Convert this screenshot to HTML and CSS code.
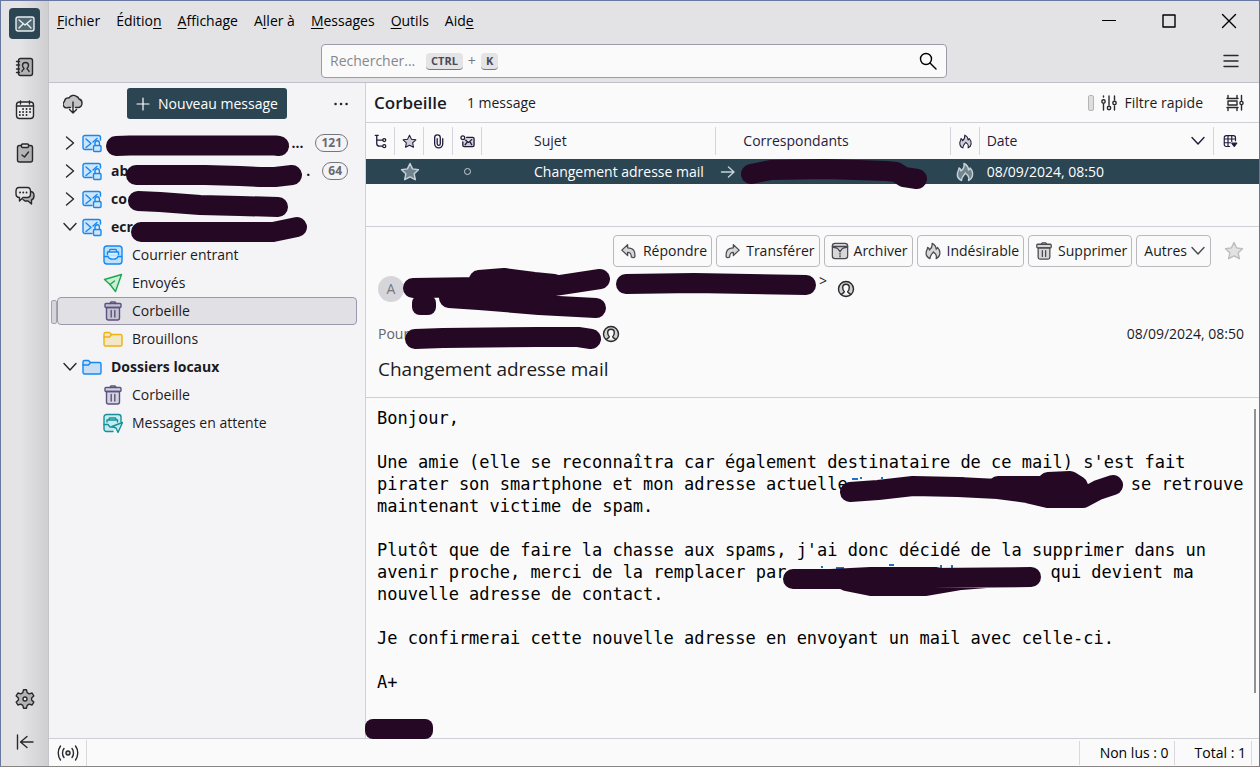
FILE: index.html
```
<!DOCTYPE html>
<html lang="fr">
<head>
    <meta charset="UTF-8">
    <meta name="viewport" content="width=device-width, initial-scale=1.0">
    <title>Corbeille</title>
    <link rel="stylesheet" href="styles.css">
</head>
<body>

    <!-- Icon set -->
    <svg class="icon-set" aria-hidden="true">
        <symbol id="i-mail" viewBox="0 0 20 20"><rect x="1" y="3" width="18" height="14" rx="2" fill="#ffffff30"/><path d="M4 6l6 5 6-5M4 14l4-4M16 14l-4-4"/></symbol>
        <symbol id="i-book" viewBox="0 0 20 20"><rect x="3.5" y="1.5" width="14" height="17" rx="2" fill="#0003"/><path d="M1.500 4.500h3M1.500 8h3M1.500 12h3M1.500 15.500h3M7 14.500c0-2 2-1.500 2-3-1-1-1.500-2-1.500-3a3 3 0 0 1 6 0c0 1-.5 2-1.500 3 0 1.500 2 1 2 3"/></symbol>
        <symbol id="i-calendar" viewBox="0 0 20 20"><rect x="1.500" y="2" width="17" height="16.500" rx="3" fill="#fff6"/><path d="M1.500 6h17M5.500 1v3M14.500 1v3"/><path d="M8 9h.1M11.500 9h.1M15 9h.1M4.800 12h.1M8 12h.1M11.500 12h.1M15 12h.1M4.800 15h.1M8 15h.1M11.500 15h.1" stroke-width="1.800"/></symbol>
        <symbol id="i-tasks" viewBox="0 0 20 20"><rect x="2.500" y="2.500" width="15" height="16.500" rx="2" fill="#0003"/><rect x="6.500" y="1" width="7" height="3.500" rx="1" fill="#ddd"/><path d="M7 12l2.500 2 4-5"/></symbol>
        <symbol id="i-chat" viewBox="0 0 20 20"><path d="M15 5.500c3 0 4 1.500 4 4s-1 4-2.500 4.500v4L13 15h-3l-2-1.500" fill="#0003"/><path d="M4 1.500h8.500c2 0 3 1.500 3 4v2c0 2.500-1 4-3 4H8L4.500 15v-3.500C2 11.500 1 10 1 7.500v-2c0-2.500 1-4 3-4z" fill="#e6e6e6"/><path d="M5 6.500h.1M8.200 6.500h.1M11.500 6.500h.1" stroke-width="1.800"/></symbol>
        <symbol id="i-gear" viewBox="0 0 20 20"><path d="M8.500.8h3l.7 2.900 2 1.200 2.900-.9 1.700 2.900-2.200 2v2.200l2.200 2-1.700 2.900-2.900-.9-2 1.200-.7 2.900h-3l-.7-2.900-2-1.200-2.900.9-1.700-2.900 2.200-2V8.900l-2.200-2L2.900 4l2.900.9 2-1.200z" fill="#0003"/><circle cx="10" cy="10" r="2" fill="#eee"/></symbol>
        <symbol id="i-collapse" viewBox="0 0 20 20"><path d="M2.500 3v14M18 10H5.500M12 4.500L5.500 10l6.500 5.500"/></symbol>
        <symbol id="i-cloud" viewBox="0 0 20 20"><path d="M7.500 13.500H5A3.500 3.500 0 0 1 1.500 7.500 3.500 3.500 0 0 1 6 4a5 5 0 0 1 7.500-1.500A3.800 3.800 0 0 1 16 5c2 .5 3 2 3 4 0 2.500-1.500 4.500-4 4.500h-2.500" fill="#0003"/><path d="M10 8v11M6.500 15.500L10 19l3.500-3.500"/></symbol>
        <symbol id="i-plus" viewBox="0 0 16 16"><path d="M8 2v12M2 8h12"/></symbol>
        <symbol id="i-dots" viewBox="0 0 20 20"><path d="M4.500 10h.1M10 10h.1M15.500 10h.1" stroke-width="2.500"/></symbol>
        <symbol id="i-right" viewBox="0 0 16 16"><path d="M4.500 2l7 6-7 6"/></symbol>
        <symbol id="i-down" viewBox="0 0 16 16"><path d="M2 4.500l6 6.500 6-6.500"/></symbol>
        <symbol id="i-account" viewBox="0 0 20 20"><path d="M10 16.500H3a2 2 0 0 1-2-2v-10a2 2 0 0 1 2-2h13.500a2 2 0 0 1 2 2V7" fill="#cfe5fb"/><path d="M4 6l5 4.500-5 4M15 5.500L11 9"/><rect x="11.500" y="12.500" width="7.500" height="6" rx="1" fill="#cfe5fb"/><path d="M13 12.500V10a2.200 2.200 0 0 1 4.400 0v2.500"/></symbol>
        <symbol id="i-inbox" viewBox="0 0 20 20"><rect x="1" y="1" width="18" height="18" rx="3" fill="#bfe0fd"/><path d="M1.500 11.500H5c1 3.500 9 3.500 10 0h3.500M4.500 9.500V7h11v2.500M6 7l1-2.500h6L14 7" fill="#e4f2ff"/></symbol>
        <symbol id="i-sent" viewBox="0 0 20 20"><path d="M18.500 1.500L1.500 6.500l5.500 5 5.500 7z" fill="#c9efd6"/><path d="M7 11.500l4.500-3.500"/></symbol>
        <symbol id="i-trash" viewBox="0 0 20 20"><path d="M3.500 6.500h13V17a2 2 0 0 1-2 2h-9a2 2 0 0 1-2-2z" class="tint"/><rect x="2" y="2.500" width="16" height="4" rx="1" class="tint"/><path d="M7 2.500l1-1.500h4l1 1.500M8.200 9.500v6.500M11.800 9.500v6.500"/></symbol>
        <symbol id="i-folder" viewBox="0 0 20 20"><path d="M1 15.500V5a1.500 1.500 0 0 1 1.500-1.500h4l2 2h9A1.500 1.500 0 0 1 19 7v8.500a1.500 1.500 0 0 1-1.500 1.500h-15A1.500 1.500 0 0 1 1 15.500z" class="tint"/><path d="M1 8h5.500l2-2.500"/></symbol>
        <symbol id="i-outbox" viewBox="0 0 20 20"><path d="M10 18.500H3.500A2.500 2.500 0 0 1 1 16V4a2.500 2.500 0 0 1 2.500-2.500h12A2.500 2.500 0 0 1 18 4v5" fill="#c3ecee"/><path d="M1 11.500h4l2 2.500h3M4 9V7h10.500v2M5.500 7l1-2h6l1 2"/><path d="M19.500 9.500l-10.500 4 4 1.500 2 4.500z" fill="#c3ecee"/></symbol>
        <symbol id="i-search" viewBox="0 0 20 20"><circle cx="8" cy="8" r="5.500"/><path d="M12 12l6 6"/></symbol>
        <symbol id="i-menu" viewBox="0 0 20 20"><path d="M3 4.500h14M3 10h14M3 15.500h14"/></symbol>
        <symbol id="i-min" viewBox="0 0 16 16"><path d="M1.500 7.500h13" stroke-width="1"/></symbol>
        <symbol id="i-max" viewBox="0 0 16 16"><rect x="2" y="2" width="12" height="12"/></symbol>
        <symbol id="i-close" viewBox="0 0 16 16"><path d="M1.500 1.500l13 13M14.500 1.500l-13 13"/></symbol>
        <symbol id="i-filter" viewBox="0 0 18 18"><path d="M3.500 2v1M3.500 10v6M9 2v9M14.500 2v4M14.500 12v4"/><circle cx="3.500" cy="7.500" r="1.700"/><circle cx="9" cy="14" r="1.700"/><circle cx="14.500" cy="9" r="1.700"/></symbol>
        <symbol id="i-display" viewBox="0 0 18 18"><path d="M2 1.500v3h9v-3M2 16.500v-3h9v3M15.500 1.500v5M15.500 11v5M1 4.500h11M1 13.500h11"/><rect x="2" y="7" width="9" height="4"/><circle cx="15.500" cy="9" r="1.600"/></symbol>
        <symbol id="i-thread" viewBox="0 0 16 16"><path d="M2.500 1.500h3M4 1.500V10c0 2 1 3 3 3h3M4 6.500h6.500"/><circle cx="12" cy="6.500" r="1.600"/><circle cx="12" cy="13" r="1.600"/></symbol>
        <symbol id="i-star" viewBox="0 0 20 20"><path d="M10 1.500l2.600 5.400 5.900.8-4.300 4.100 1.100 5.900L10 14.900l-5.300 2.800 1.100-5.900L1.500 7.700l5.900-.8z" class="tint"/></symbol>
        <symbol id="i-clip" viewBox="0 0 16 16"><path d="M12.500 5v5.500a4.300 4.300 0 0 1-8.600 0V4a3 3 0 0 1 6 0v6.500a1.600 1.600 0 0 1-3.300 0V5"/></symbol>
        <symbol id="i-unread" viewBox="0 0 16 16"><path d="M7 3.500h6.500a1.500 1.500 0 0 1 1.500 1.500v7a1.500 1.500 0 0 1-1.500 1.500h-9A1.500 1.500 0 0 1 3 12V8.500M6 6.500l3 2.500 3.500-3M5.500 11.500L7.500 9M12.500 11.500L11 9" class="tint"/><circle cx="3" cy="4" r="2"/></symbol>
        <symbol id="i-flame" viewBox="0 0 20 20"><path d="M6.500 18.500C3 17 2 14 2.500 11c.5-2 1.500-3 1.500-5 1 .5 2 2 2 3C8 7.500 9.500 5 9 1.500c3 1.500 4.500 4 4.500 6.500 1-.5 1.500-1 1.500-2 2 2 3 5 2.500 7.500-.4 2.500-1.800 4-4 5 .5-2 .5-4-1-5.500-1 0-1.500-1-2-2-1.500 2-4 4-4 7.500z" class="tint"/></symbol>
        <symbol id="i-columns" viewBox="0 0 18 18"><path d="M8 15H4a2.500 2.500 0 0 1-2.500-2.500v-8A2.500 2.500 0 0 1 4 2h8.500A2.500 2.500 0 0 1 15 4.500V8M1.500 6H15M1.500 10.500H9M6 2v13M10.500 2v7"/><path d="M10.500 11h6l-3 4z" fill="currentColor"/></symbol>
        <symbol id="i-arrow" viewBox="0 0 16 16"><path d="M1.500 8H14M8.500 3L14 8l-5.500 5"/></symbol>
        <symbol id="i-reply" viewBox="0 0 20 20"><path d="M8.500 3L2 9l6.500 6v-3.500c3 0 4 1 4 5 1 1 4 1 4 0C17 10 15 6.500 8.500 6.500z" class="tint"/></symbol>
        <symbol id="i-forward" viewBox="0 0 20 20"><path d="M11.500 3L18 9l-6.500 6v-3.500c-3 0-4 1-4 5-1 1-4 1-4 0C3 10 5 6.500 11.500 6.500z" class="tint"/></symbol>
        <symbol id="i-archive" viewBox="0 0 20 20"><rect x="1.500" y="1.500" width="17" height="17" rx="3" class="tint"/><path d="M1.500 5h17M2 6c3 0 6 1 7 3.500h2C12 7 15 6 18 6"/><path d="M10 10v8" stroke-dasharray="1.500 1" stroke-width="2" stroke-linecap="butt"/></symbol>
        <symbol id="i-contact" viewBox="0 0 18 18"><circle cx="9" cy="9" r="7.500" class="tint"/><path d="M4.500 14.500c1-1.500 2.800-1.500 2.800-3C6 10.500 5.700 9 5.700 7.500a3.300 3.300 0 0 1 6.600 0c0 1.500-.3 3-1.600 4 0 1.500 1.800 1.500 2.800 3" fill="#fafafa"/></symbol>
        <symbol id="i-signal" viewBox="0 0 22 18"><circle cx="11" cy="9" r="2" class="tint"/><path d="M7 4.500c-2 2.500-2 6.500 0 9M15 4.500c2 2.500 2 6.500 0 9M3.500 2c-3 4-3 10 0 14M18.500 2c3 4 3 10 0 14"/></symbol>
    </svg>

    <div class="app">
        <nav class="spaces" aria-label="Espaces">
            <button class="space active" aria-label="Courrier"><svg class="icon"><use href="#i-mail"/></svg></button>
            <button class="space" aria-label="Adresses"><svg class="icon"><use href="#i-book"/></svg></button>
            <button class="space" aria-label="Agenda"><svg class="icon"><use href="#i-calendar"/></svg></button>
            <button class="space" aria-label="Tâches"><svg class="icon"><use href="#i-tasks"/></svg></button>
            <button class="space" aria-label="Discussions"><svg class="icon"><use href="#i-chat"/></svg></button>
            <button class="space push" aria-label="Paramètres"><svg class="icon"><use href="#i-gear"/></svg></button>
            <button class="space" aria-label="Réduire"><svg class="icon"><use href="#i-collapse"/></svg></button>
        </nav>

        <div class="main">
            <header class="titlebar">
                <div class="menubar">
                    <button><u>F</u>ichier</button>
                    <button>Éditio<u>n</u></button>
                    <button><u>A</u>ffichage</button>
                    <button>A<u>l</u>ler à</button>
                    <button><u>M</u>essages</button>
                    <button><u>O</u>utils</button>
                    <button>Aid<u>e</u></button>
                    <div class="window-controls">
                        <button aria-label="Minimiser"><svg class="icon"><use href="#i-min"/></svg></button>
                        <button aria-label="Agrandir"><svg class="icon"><use href="#i-max"/></svg></button>
                        <button aria-label="Fermer"><svg class="icon"><use href="#i-close"/></svg></button>
                    </div>
                </div>
                <div class="toolbar">
                    <form class="search">
                        <input type="text" placeholder="Rechercher..." aria-label="Rechercher">
                        <kbd>CTRL</kbd><span class="key-plus">+</span><kbd>K</kbd>
                        <button type="submit" aria-label="Lancer la recherche"><svg class="icon"><use href="#i-search"/></svg></button>
                    </form>
                    <button class="app-menu" aria-label="Menu"><svg class="icon"><use href="#i-menu"/></svg></button>
                </div>
            </header>

            <div class="panes">
                <aside class="folders">
                    <div class="folders-head">
                        <button class="plain" aria-label="Relever"><svg class="icon"><use href="#i-cloud"/></svg></button>
                        <button class="compose"><svg class="icon small"><use href="#i-plus"/></svg>Nouveau message</button>
                        <button class="plain" aria-label="Options"><svg class="icon"><use href="#i-dots"/></svg></button>
                    </div>
                    <ul class="tree">
                        <li><a href="#" class="account"><svg class="icon twisty"><use href="#i-right"/></svg><svg class="icon blue"><use href="#i-account"/></svg>
                            <span class="name"><svg class="mark over" width="190" height="28"><path class="pen" d="M6 17L20 16.500H165L169 17"/></svg><span class="tail">...</span></span><span class="badge">121</span></a></li>
                        <li><a href="#" class="account"><svg class="icon twisty"><use href="#i-right"/></svg><svg class="icon blue"><use href="#i-account"/></svg>
                            <span class="name">ab<svg class="mark over" width="190" height="28"><path class="pen" d="M26 18H95L130 19L150 20H165L182 18"/></svg><span class="tail">.</span></span><span class="badge">64</span></a></li>
                        <li><a href="#" class="account"><svg class="icon twisty"><use href="#i-right"/></svg><svg class="icon blue"><use href="#i-account"/></svg>
                            <span class="name">co<svg class="mark over" width="190" height="28"><path class="pen" d="M28 16L50 17L90 20L130 21L168 22"/></svg></span></a></li>
                        <li><a href="#" class="account"><svg class="icon twisty"><use href="#i-down"/></svg><svg class="icon blue"><use href="#i-account"/></svg>
                            <span class="name">ecr<svg class="mark over" width="190" height="28"><path class="pen" d="M31 19H163L187 14"/></svg></span></a>
                            <ul>
                                <li><a href="#"><svg class="icon blue"><use href="#i-inbox"/></svg>Courrier entrant</a></li>
                                <li><a href="#"><svg class="icon green"><use href="#i-sent"/></svg>Envoyés</a></li>
                                <li><a href="#" class="selected"><svg class="icon violet"><use href="#i-trash"/></svg>Corbeille</a></li>
                                <li><a href="#"><svg class="icon yellow"><use href="#i-folder"/></svg>Brouillons</a></li>
                            </ul>
                        </li>
                        <li><a href="#" class="account"><svg class="icon twisty"><use href="#i-down"/></svg><svg class="icon blue"><use href="#i-folder"/></svg>
                            <span class="name">Dossiers locaux</span></a>
                            <ul>
                                <li><a href="#"><svg class="icon violet"><use href="#i-trash"/></svg>Corbeille</a></li>
                                <li><a href="#"><svg class="icon teal"><use href="#i-outbox"/></svg>Messages en attente</a></li>
                            </ul>
                        </li>
                    </ul>
                </aside>

                <main class="content">
                    <div class="list-head">
                        <h1>Corbeille</h1>
                        <span>1 message</span>
                        <button class="quick-filter"><i class="handle"></i><svg class="icon medium"><use href="#i-filter"/></svg>Filtre rapide</button>
                        <button class="plain" aria-label="Affichage"><svg class="icon medium"><use href="#i-display"/></svg></button>
                    </div>

                    <div class="threads">
                        <table>
                            <colgroup>
                                <col class="c-icon"><col class="c-icon"><col class="c-icon"><col class="c-icon">
                                <col><col><col class="c-icon"><col><col class="c-picker">
                            </colgroup>
                            <thead>
                                <tr>
                                    <th aria-label="Fil"><svg class="icon"><use href="#i-thread"/></svg></th>
                                    <th aria-label="Suivi"><svg class="icon"><use href="#i-star"/></svg></th>
                                    <th aria-label="Pièce jointe"><svg class="icon"><use href="#i-clip"/></svg></th>
                                    <th aria-label="Lu"><svg class="icon"><use href="#i-unread"/></svg></th>
                                    <th class="subject">Sujet</th>
                                    <th class="who">Correspondants</th>
                                    <th aria-label="Indésirable"><svg class="icon"><use href="#i-flame"/></svg></th>
                                    <th class="date"><div class="sorted">Date<svg class="icon small"><use href="#i-down"/></svg></div></th>
                                    <th class="picker" aria-label="Colonnes"><svg class="icon"><use href="#i-columns"/></svg></th>
                                </tr>
                            </thead>
                            <tbody>
                                <tr>
                                    <td></td>
                                    <td><svg class="icon"><use href="#i-star"/></svg></td>
                                    <td></td>
                                    <td><i class="ring"></i></td>
                                    <td class="subject">Changement adresse mail</td>
                                    <td class="sender"><svg class="icon small"><use href="#i-arrow"/></svg><svg class="mark" width="190" height="25"><path class="pen" d="M15 15L35 11L90 10L150 12L160 13L168 18L181 20"/></svg></td>
                                    <td><svg class="icon"><use href="#i-flame"/></svg></td>
                                    <td class="date">08/09/2024, 08:50</td>
                                    <td></td>
                                </tr>
                            </tbody>
                        </table>
                    </div>

                    <article class="message">
                        <header class="message-head">
                            <div class="actions">
                                <button><svg class="icon medium"><use href="#i-reply"/></svg>Répondre</button>
                                <button><svg class="icon medium"><use href="#i-forward"/></svg>Transférer</button>
                                <button><svg class="icon medium"><use href="#i-archive"/></svg>Archiver</button>
                                <button><svg class="icon medium"><use href="#i-flame"/></svg>Indésirable</button>
                                <button><svg class="icon medium"><use href="#i-trash"/></svg>Supprimer</button>
                                <button>Autres<svg class="icon small"><use href="#i-down"/></svg></button>
                                <button class="flag" aria-label="Suivre"><svg class="icon"><use href="#i-star"/></svg></button>
                            </div>
                            <div class="from">
                                <span class="avatar">A</span>
                                <svg class="mark" width="417" height="44"><path class="pen" d="M9 21L75 20L150 19L196 12M75 13L100 11L130 15L150 17M45 31L75 33L135 38L192 41M60 27H140M222 17L290 16L402 18"/><rect class="blot" x="8" y="28" width="24" height="20" rx="8"/></svg>
                                <span class="bracket">&gt;</span>
                                <svg class="icon medium"><use href="#i-contact"/></svg>
                            </div>
                            <div class="to">
                                <span class="label">Pour</span>
                                <svg class="mark over" width="200" height="24"><path class="pen" d="M37 16L65 15L160 14L200 14L213 16"/></svg>
                                <svg class="icon medium"><use href="#i-contact"/></svg>
                                <time>08/09/2024, 08:50</time>
                            </div>
                            <h2>Changement adresse mail</h2>
                        </header>
                        <div class="message-body">
                            <p>Bonjour,</p>
                            <p>Une amie (elle se reconnaîtra car également destinataire de ce mail) s'est fait<br>
                            pirater son smartphone et mon adresse actuelle<svg class="mark" width="283" height="22"><path class="link-tip" d="M4 6h6M13 4v2M34 4v2M110 5h6M184 4h7"/><path class="pen" d="M2 19L30 17L65 13L110 14L150 16L180 20H215M150 13H205M200 9L222 8L230 13M170 18L200 25H235L250 17L265 12"/></svg>se retrouve<br>
                            maintenant victime de spam.</p>
                            <p>Plutôt que de faire la chasse aux spams, j'ai donc décidé de la supprimer dans un<br>
                            avenir proche, merci de la remplacer par<svg class="mark" width="264" height="22"><path class="link-tip" d="M36 5v2M50 7h8M103 4h5M155 4v5M166 4v4"/><path class="pen" d="M7 18H45L85 16L145 17L245 16M60 20L85 25H140L175 19L200 17M85 16H150"/></svg>qui devient ma<br>
                            nouvelle adresse de contact.</p>
                            <p>Je confirmerai cette nouvelle adresse en envoyant un mail avec celle-ci.</p>
                            <p>A+</p>
                            <p><svg class="mark signature" width="68" height="22"><rect class="blot" y="4" width="68" height="20" rx="8"/></svg></p>
                            <i class="scrollbar"></i>
                        </div>
                    </article>
                </main>
            </div>

            <footer class="statusbar">
                <span class="status-icon"><svg class="icon"><use href="#i-signal"/></svg></span>
                <span class="count">Non lus : 0</span>
                <span class="count">Total : 1</span>
            </footer>
        </div>
    </div>

</body>
</html>
```
FILE: styles.css
```
* { box-sizing: border-box; }
body { margin: 0; font-family: 'Open Sans', 'Noto Sans', sans-serif; font-size: 14px; line-height: 20px; color: #1a1a1f; }
button { font: inherit; color: inherit; background: none; border: none; padding: 0; }
a { color: inherit; text-decoration: none; }
ul { list-style: none; margin: 0; padding: 0; }

.icon-set { display: none; }
.icon { width: 20px; height: 20px; flex: none; fill: none; stroke: currentColor; stroke-width: 1.4; stroke-linecap: round; stroke-linejoin: round; color: #28282d; }
.icon.medium { width: 18px; height: 18px; }
.icon.small { width: 16px; height: 16px; }
.tint { fill: currentColor; fill-opacity: var(--tint, 0.2); }
.icon.blue { color: #1588f0; }
.icon.green { color: #1fa650; }
.icon.violet { color: #5b5280; }
.icon.yellow { color: #edb210; }
.icon.teal { color: #17909c; }

/* black marker over private addresses */
.mark { overflow: visible; flex: none; }
.pen { fill: none; stroke: #240824; stroke-width: 20; stroke-linecap: round; stroke-linejoin: round; }
.blot { fill: #240824; }
.link-tip { fill: none; stroke: #2070c8; stroke-width: 2; }

.app { display: flex; min-height: 100vh; border: 1px solid #6878a0; border-right-color: #68788c; border-bottom-color: #8a8585; background: #fafafa; }
.main { flex: 1; min-width: 0; display: flex; flex-direction: column; }

/* Left rail */
.spaces { width: 48px; flex: none; display: flex; flex-direction: column; align-items: center; gap: 12px; padding: 7px 0 9px; background: linear-gradient(90deg, #e4e4e6 40%, #cfcfd1); border-right: 1px solid #c4c4ca; }
.space { width: 31px; height: 31px; border-radius: 4px; display: flex; align-items: center; justify-content: center; }
.space.active { background: #2b4553; }
.space.active .icon { color: #e8eef0; }
.push { margin-top: auto; }

/* Title bar */
.titlebar { background: #e3e3e6; border-bottom: 1px solid #c2bfcc; }
.menubar { display: flex; align-items: center; gap: 16px; height: 40px; padding-left: 8px; color: #000; }
.menubar u { text-underline-offset: 2px; }
.window-controls { margin-left: auto; display: flex; }
.window-controls button { width: 60px; height: 20px; display: flex; align-items: center; justify-content: center; }
.window-controls .icon { width: 16px; height: 16px; color: #000; }
.toolbar { display: flex; align-items: center; height: 41px; padding: 0 18px 1px 272px; }
.search { flex: 0 1 626px; height: 34px; display: flex; align-items: center; padding: 0 8px; background: #fafafa; border: 1px solid #9d9aae; border-radius: 4px; }
.search input { width: 96px; padding: 0; border: none; background: none; font: inherit; }
.search input::placeholder { color: #86868c; opacity: 1; }
.search button { margin-left: auto; height: 20px; }
.search .icon { color: #000; }
kbd { font-family: 'Open Sans', 'Noto Sans', sans-serif; font-size: 11px; font-weight: 700; line-height: 16px; color: #4a4a55; background: #e4e4e7; border-bottom: 1px solid #77777f; border-radius: 4px; padding: 0 5px; }
.key-plus { color: #77777c; padding: 0 5px; }
.app-menu { margin-left: auto; height: 20px; }

.panes { flex: 1; display: flex; }

/* Folder pane */
.folders { width: 317px; flex: none; background: #f4f4f6; border-right: 1px solid #cfcfd6; }
.folders-head { display: flex; align-items: center; justify-content: space-between; height: 46px; padding: 0 14px 5px 14px; }
.plain { height: 20px; display: flex; align-items: center; }
.compose { display: flex; align-items: center; gap: 7px; height: 31px; padding: 0 9px 0 8px; margin: 0 34px; background: #2b4553; color: #fff; border-radius: 3px; }
.compose .icon { color: #fff; stroke-width: 1.2; }
.tree a { display: flex; align-items: center; height: 28px; padding-left: 45px; gap: 9px; margin: 0 8px; border: 1px solid transparent; border-radius: 4px; position: relative; }
.tree a.account { padding: 0 8px 0 4px; gap: 4px; }
.twisty { width: 16px; height: 16px; }
.name { flex: 1; display: flex; align-items: center; font-weight: 700; position: relative; padding-left: 5px; }
.name .over { position: absolute; left: 4px; top: -4px; }
.name:has(.over:first-child) { height: 20px; }
.tail { margin-left: auto; }
.tree a.selected { background: #e1e1e5; border-color: #9c98aa; }
.tree a.selected::before { content: ''; position: absolute; left: -7px; top: 2px; width: 4px; height: 22px; background: #d5d5da; border: 1px solid #a5a3b0; border-radius: 2px; }
.badge { border: 1px solid #75757e; border-radius: 10px; padding: 0 5px; margin-left: 8px; font-size: 12px; line-height: 16px; font-weight: 700; color: #696972; }

/* Message list */
.content { flex: 1; min-width: 0; display: flex; flex-direction: column; }
.list-head { display: flex; align-items: center; gap: 20px; height: 40px; padding: 0 15px 0 8px; border-bottom: 1px solid #cfcfd6; }
.list-head h1 { margin: 0; font-size: 17px; line-height: 24px; font-weight: 600; }
.quick-filter { margin: 0 3px 0 auto; display: flex; align-items: center; gap: 6px; }
.handle { width: 6px; height: 16px; background: #dedede; border: 1px solid #b5b5b5; border-radius: 2px; }
.threads { height: 104px; border-bottom: 1px solid #cfcfd6; }
table { width: 100%; table-layout: fixed; border-collapse: collapse; }
.c-icon { width: 29px; }
.c-picker { width: 45px; }
th, td { padding: 0; text-align: center; white-space: nowrap; }
th { height: 36px; font-weight: 400; color: #1f1c3d; background: linear-gradient(#d5d5db, #d5d5db) right center / 1px 28px no-repeat; }
th .icon, td .icon { display: block; margin: 0 auto; }
th .icon { width: 15px; height: 15px; color: #1f1c3d; }
th.subject, td.subject { text-align: left; padding-left: 52px; }
th.who { text-align: left; padding-left: 27px; }
th.date, td.date { text-align: left; padding-left: 7px; }
th.picker { background: none; }
th.picker .icon { margin-left: 9px; }
.sorted { display: flex; align-items: center; padding-right: 8px; }
.sorted .icon { margin: 0 0 0 auto; }
td { height: 25px; background: #2b4553; color: #fff; }
td .icon { color: #c8d2d8; --tint: 0.45; }
td.sender { display: flex; align-items: center; gap: 0; padding-left: 4px; }
td.sender .icon { margin: 0; }
.ring { display: block; width: 7px; height: 7px; margin: 0 auto; border: 1px solid #c8d2d8; border-radius: 50%; }

/* Message view */
.message { flex: 1; display: flex; flex-direction: column; }
.message-head { padding: 8px 15px 15px 12px; border-bottom: 1px solid #cfcfd6; }
.actions { display: flex; justify-content: flex-end; gap: 4px; }
.actions button { display: flex; align-items: center; gap: 5px; height: 32px; padding: 0 4px 0 6px; border: 1px solid #b9b9be; border-radius: 4px; }
.actions button .icon { color: #4a4a50; }
.actions button:nth-child(6) { padding-left: 7px; gap: 3px; }
.actions button.flag { border: none; padding: 0; margin-left: 9px; }
.actions .flag .icon { color: #bdbdc0; --tint: 0.4; }
.from { display: flex; align-items: center; height: 44px; }
.avatar { width: 26px; height: 26px; border-radius: 50%; background: #d6d6da; color: #77777c; text-align: center; line-height: 26px; }
.from .mark { margin-right: -2px; }
.from .icon { margin-left: 10px; }
.bracket { align-self: flex-start; padding-top: 4px; }
.to { display: flex; align-items: center; height: 46px; position: relative; }
.to .label { color: #636368; }
.to .over { position: absolute; left: 0; top: 12px; }
.to .icon { margin-left: 193px; }
.to time { margin-left: auto; }
.message-head h2 { margin: 0; font-size: 19px; line-height: 25px; font-weight: 400; }
.message-body { flex: 1; position: relative; padding: 9px 11px 1px; font-family: 'DejaVu Sans Mono', monospace; font-size: 17px; line-height: 22px; color: #000; white-space: nowrap; }
.message-body p { margin: 0 0 22px; }
.message-body p:last-of-type { margin: 0; }
.message-body .mark { vertical-align: top; }
.message-body .signature { margin-left: -12px; }
.scrollbar { position: absolute; right: 3px; top: 11px; bottom: 45px; width: 2px; background: #929296; }

/* Status bar */
.statusbar { display: flex; align-items: center; height: 28px; border-top: 1px solid #cfcfd6; padding-right: 7px; }
.status-icon { width: 38px; height: 26px; display: flex; align-items: center; justify-content: center; border-right: 1px solid #d8d8dd; margin-right: auto; }
.status-icon .icon { width: 22px; }
.count { border-right: 1px solid #d8d8dd; padding: 2px 5px 2px 20px; color: #000; }
.count:nth-child(2) { border-left: 1px solid #d8d8dd; }
```
